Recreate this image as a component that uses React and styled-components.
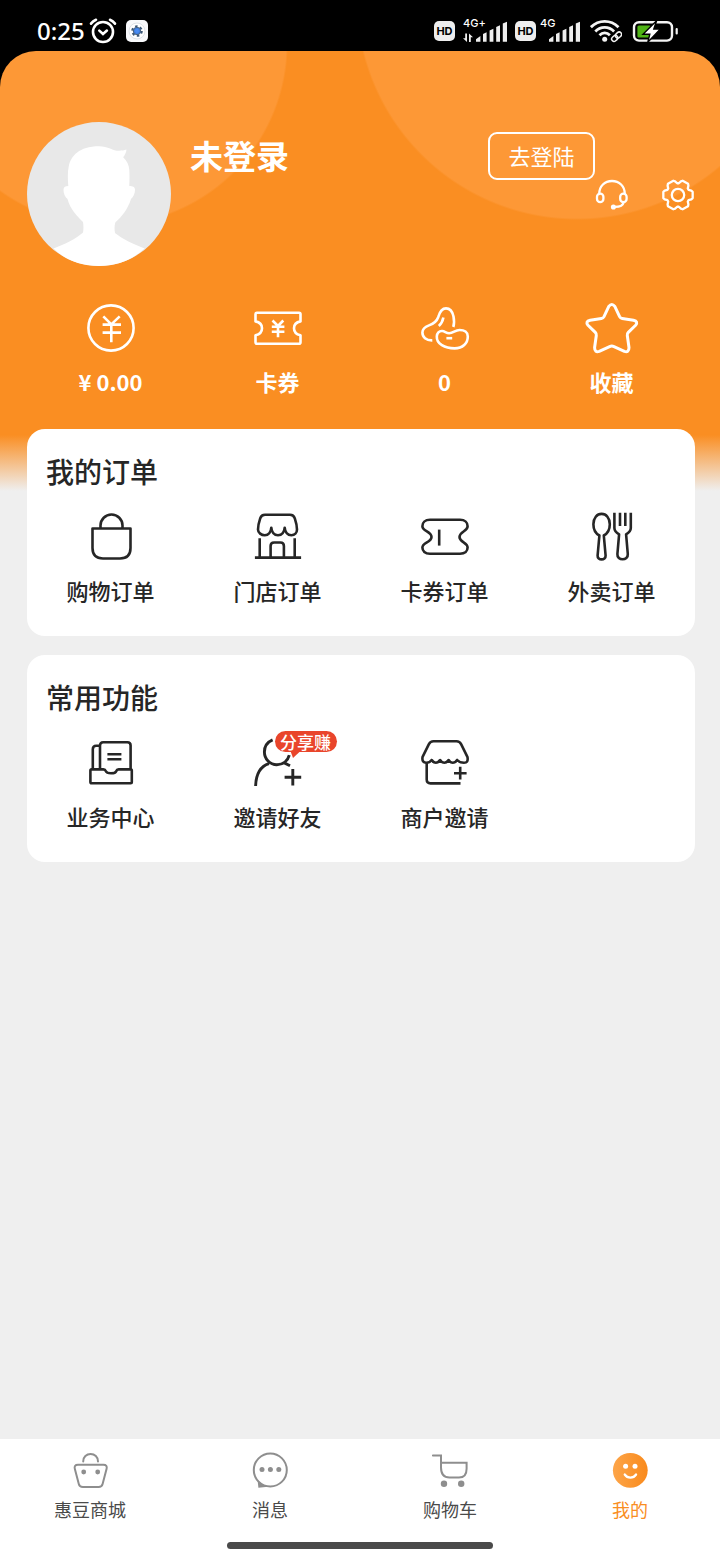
import React from "react";
import styled, { createGlobalStyle } from "styled-components";

const gearPoints = Array.from({ length: 6 }, (_, i) => {
  const point = (deg, r) => {
    const a = (deg * Math.PI) / 180;
    return `${(16 + r * Math.cos(a)).toFixed(2)},${(15 + r * Math.sin(a)).toFixed(2)}`;
  };
  return [
    point(i * 60 - 18, 14),
    point(i * 60 - 12, 15),
    point(i * 60 + 12, 15),
    point(i * 60 + 18, 14),
    point(i * 60 + 26, 11.8),
    point(i * 60 + 34, 11.8),
  ].join(" ");
}).join(" ");

const icons = {
  yuan: (
    <>
      <circle cx="24" cy="24" r="22.6" />
      <path d="M16.3 12.4l8 8 8.4-8M15.6 20.6h18.4M15.6 28.6h18.4M24.3 20.6v17.6" />
    </>
  ),
  voucher: (
    <>
      <path d="M3 8.800h42q1.500 0 1.500 1.500V17.400c-4.600.8-6.500 3.600-6.500 6.900s1.900 6.100 6.500 6.900v7q0 1.500-1.500 1.500H3q-1.500 0-1.500-1.500v-7c4.600-.8 6.500-3.600 6.500-6.900s-1.900-6.100-6.500-6.900v-7.100Q1.500 8.800 3 8.800z" />
      <path d="M18.500 16.500l5.500 5.500 5.300-5.500M17.800 22.800h12.600M17.800 27.800h12.600M24 22.500v10.700" />
    </>
  ),
  beans: (
    <>
      <path d="M11.300 36.400C5 36.600 1.400 33 1.400 28.600c0-4 2.800-5.800 6.600-7.200 4.400-1.600 7.500-3.600 9.200-8.200C18.500 8.500 20.200 4.400 25 4.400c4.600 0 6.500 3.400 7.500 8.100.8 4 .9 7.200-.2 10.500" />
      <path d="M22.400 13.500c-.7 3.600-2.200 6.400-4.600 8.500" />
      <path d="M15.800 32.500c.2-3.400 2.200-5.700 5.400-5.500 2.800.2 3.800 2.200 7 2.200 4.200 0 5.800-3.200 10.400-3.200 4.800 0 8.200 2.200 8.200 6.400 0 7-5.200 12-13.200 12-9.800 0-18.200-4.600-17.800-11.900z" />
      <path d="M25.400 34.200h5.800" />
    </>
  ),
  star: (
    <path d="M20.800 2.400Q23.800-1.600 26.800 2.400L31.600 12.600Q32.400 14.200 34.200 14.500L45.500 16.200Q50.600 17.400 47.600 21.200L40.300 28.400Q39 29.700 39.300 31.500L41 43.500Q41 48.800 36.400 47.400L26 42.600Q23.800 41.600 21.600 42.600L11.200 47.400Q6.600 48.800 6.600 43.500L8.300 31.500Q8.600 29.700 7.300 28.400L0 21.200Q-3 17.400 2.100 16.200L13.400 14.500Q15.200 14.200 16 12.600z" strokeWidth="3" />
  ),
  bag: (
    <>
      <path d="M5.500 15.500h38V35q0 10.500-10.500 10.500H16Q5.500 45.500 5.500 35z" />
      <path d="M13.500 15v-2.500a11 11 0 0 1 22 0V15" />
    </>
  ),
  store: (
    <>
      <path d="M11 1.800h25q3.600 0 4.800 3.600C42 9 43 13 43 16.500c0 3.400-2.400 5.700-5.600 5.700-3.800 0-6.400-3-6.700-7.500-.3 4.500-2.900 7.500-6.700 7.500s-6.400-3-6.700-7.500c-.3 4.500-2.900 7.500-6.500 7.500-3.400 0-6.800-2.300-6.800-5.700C4 13 5 9 6.200 5.400Q7.400 1.800 11 1.800z" />
      <path d="M5.700 25.300v19M40.700 25.300v19M.9 44.600h46.200M16.600 44.500V33q0-3.500 3.500-3.500h6.300q3.500 0 3.500 3.500v11.500" />
    </>
  ),
  coupon: (
    <>
      <path d="M9 6.800h30c5 0 7.600 3 7.600 6.400 0 5.300-8.100 5.300-8.100 10.800s8.100 5.300 8.100 10.600c0 3.400-2.600 6.200-7.600 6.200H9c-5 0-7.600-2.800-7.600-6.200 0-5.300 9.100-5.100 9.100-10.600S1.400 18.500 1.400 13.200C1.400 9.800 4 6.800 9 6.800z" />
      <path d="M18.200 16.600v16" />
    </>
  ),
  cutlery: (
    <>
      <path d="M11.400 22.500C7.800 20.500 5.400 16.200 5.400 11.200 5.400 5 9 .9 13.600.9s8.200 4.100 8.200 10.300c0 5-2.400 9.300-6 11.300l1.800 20c.4 5.200-8.400 5.200-8 0z" />
      <path d="M26.400-.2V15q0 3.600 4.700 6.300L29.400 41c-.6 7 11 7 10.400 0l-1.700-19.700q4.700-2.700 4.700-6.300V-.2M32-.2v13.200M37.300-.2v13.200" />
    </>
  ),
  business: (
    <>
      <path d="M4.600 30.400h11.800c1 0 2 .6 2.400 1.800 1 2.800 9.400 2.800 10.400 0 .4-1.200 1.400-1.800 2.400-1.800h12q1.200 0 1.200 1.200v11.500q0 1.200-1.200 1.200H4.600q-1.200 0-1.200-1.200V31.600q0-1.200 1.200-1.200z" />
      <path d="M13 30V6.500q0-3.200 3.200-3.200h24.200q3.200 0 3.200 3.200V30M5.800 30V10.200q0-3.400 3.400-3.400H13" />
      <path d="M20.400 15.300h14M20.400 20.200h14" />
    </>
  ),
  invite: (
    <path d="M18.600.8C13.500 3 10.400 7.600 10.400 12.900c0 7.100 5.600 12.800 12.400 12.800 6.200 0 11-3.800 12.500-9.500M1.600 47C2 35 6.500 27.200 15 24.600M29.300 23.400l6.700 3.400M30.600 38.200h16.600M38.800 30v16.400" strokeWidth="2.900" />
  ),
  merchant: (
    <>
      <path d="M12.500 2.200h23q3.200 0 4.600 3l6.300 12.600q1.300 6-3.500 6-4.300 0-6.800-2.800-1.800 2.800-4.300 2.800t-4.200-2.800q-1.600 2.800-4.200 2.800t-4.300-2.800q-1.600 2.800-4.200 2.800t-4.200-2.800q-2.200 2.800-5.200 2.800-5 0-3.900-6L7.900 5.200q1.400-3 4.600-3z" />
      <path d="M5.700 24v16.600q0 3.800 3.800 3.800h30M33 34.200h12.600M39.200 27.800v12.600" />
    </>
  ),
};

const menuOrders = [
  { icon: "bag", label: "购物订单" },
  { icon: "store", label: "门店订单" },
  { icon: "coupon", label: "卡券订单" },
  { icon: "cutlery", label: "外卖订单" },
];

const menuTools = [
  { icon: "business", label: "业务中心" },
  { icon: "invite", label: "邀请好友", badge: "分享赚" },
  { icon: "merchant", label: "商户邀请" },
];

const stats = [
  { icon: "yuan", label: "¥ 0.00" },
  { icon: "voucher", label: "卡券" },
  { icon: "beans", label: "0" },
  { icon: "star", label: "收藏" },
];

function Signal({ label, data }) {
  return (
    <SignalBox $wide={data}>
      <span>{label}</span>
      <svg width="44" height="22" viewBox="0 0 44 22" fill="#eee">
        {data && (
          <path d="M2.200 13.500h1.800v8.500L0 18.200h2.200zM6 22v-8.500l4 3.800H7.800V22z" />
        )}
        <path d="M13 21.800v-2.500l4.400-3.300v5.800zM20 21.800v-7.800l3.600-1.800v9.600zM26.600 21.800V10.600l3.800-1.800v13zM33.200 21.800V7l3.800-1.800v16.600zM39.800 21.800V3.600L44 1.800v20z" />
      </svg>
    </SignalBox>
  );
}

function Menu({ title, items }) {
  return (
    <Card>
      <h2>{title}</h2>
      <Grid>
        {items.map((item) => (
          <Item key={item.label} href="#">
            <IconBox>
              <LineIcon viewBox="0 0 48 48">{icons[item.icon]}</LineIcon>
              {item.badge && <Badge>{item.badge}</Badge>}
            </IconBox>
            <span>{item.label}</span>
          </Item>
        ))}
      </Grid>
    </Card>
  );
}

export default function App() {
  return (
    <Page>
      <GlobalStyle />
      <StatusBar>
        <div className="left">
          <time>0:25</time>
          <svg width="28" height="26" viewBox="0 0 28 26" fill="none" stroke="#fff" strokeWidth="2.600" strokeLinecap="round">
            <circle cx="14" cy="14" r="10" />
            <path d="M10.300 12.600l3.700 3.400 3.900-3.400M2 5.600Q4 3 7 1.800M26 5.600Q24 3 21 1.800" />
          </svg>
          <svg className="app" width="22" height="22" viewBox="0 0 22 22">
            <rect width="22" height="22" rx="5" fill="#f8f9fb" />
            <circle cx="11" cy="11" r="8" fill="#fff" stroke="#dfe3e8" />
            <circle cx="11" cy="11" r="4.600" fill="none" stroke="#3d5876" strokeWidth="2.400" strokeDasharray="2.400 2.416" />
            <circle cx="11" cy="11" r="3.700" fill="#3f7fe0" stroke="#4a6380" strokeWidth="1" />
            <circle cx="11" cy="11" r="2" fill="#4b8df2" />
          </svg>
        </div>
        <div className="right">
          <Hd>HD</Hd>
          <Signal label="4G+" data />
          <Hd>HD</Hd>
          <Signal label="4G" />
          <svg className="wifi" width="32" height="24" viewBox="0 0 32 24" fill="none" stroke="#f4f4f4" strokeWidth="2.800">
            <path d="M.9 8.200C8.800.4 20.600.4 28.500 8.200M5.300 12.400c5.500-5.400 13.300-5.400 18.800 0M9.500 16.200c3-3 7.400-3 10.400 0" />
            <circle cx="14.700" cy="20.200" r="2.500" fill="#f4f4f4" stroke="none" />
            <g strokeWidth="1.500" transform="rotate(-42 26.500 17.800)">
              <rect x="20.800" y="15.400" width="6.600" height="4.800" rx="2.400" />
              <rect x="25.800" y="15.400" width="6.600" height="4.800" rx="2.400" />
            </g>
          </svg>
          <svg className="battery" width="46" height="23" viewBox="0 0 46 23">
            <rect x="2" y="2.200" width="38" height="18.400" rx="5" fill="none" stroke="#f4f4f4" strokeWidth="2.400" />
            <rect x="5.400" y="5.400" width="13.500" height="12" rx="1.500" fill="#4fb315" />
            <rect x="43.600" y="8" width="2.200" height="6.600" rx="1" fill="#f4f4f4" />
            <path d="M24.600.8L11 14.200h6.800l-2 8L28.400 9h-6.600z" fill="#fff" stroke="#000" strokeWidth="1.400" />
          </svg>
        </div>
      </StatusBar>

      <Screen>
        <Profile>
          <Avatar viewBox="0 0 144 144">
            <circle cx="72" cy="72" r="72" fill="#e8e8e8" />
            <path
              fill="#fff"
              d="M41.300 64c-.6-7-.8-14 .5-20C44 34 52 24.200 72 24.200c9 0 14 4.600 20 4.600 3 0 5-.4 7.500-1.200-.3 3-1.500 5.400-3.300 7.600 4 4 5.800 8 6.100 12.800.3 5 .2 11 0 16 3.400 0 5.700 1 5.700 3.800 0 4-1.600 7.200-4 9.200C101 87 94.500 95 88.300 100.500c-1 3.500-.9 7-.3 10.500 8 6.500 18 11 29.600 15.500C105 138 90 144 72 144s-34-6-45.500-17.500C38 122 49 117 56 110.500c.6-3.500.6-7 0-10.500C50 94 43 87 40.500 77c-2.600-2-4-5.200-4-9.200 0-2.800 2-3.800 4.800-3.800z"
            />
          </Avatar>
          <h1>未登录</h1>
          <LoginButton type="button">去登陆</LoginButton>
          <Actions>
            <button type="button" aria-label="客服">
              <svg width="32" height="32" viewBox="0 0 32 32">
                <path d="M3.200 14C3.200 6 8.800 1 16 1s12.800 5 12.800 13" />
                <rect x="1" y="13.600" width="6.400" height="8.600" rx="3.200" />
                <rect x="24.200" y="13.600" width="6.400" height="8.600" rx="3.200" />
                <path d="M27.600 22.400c-.6 2.600-3.400 4.400-8.600 4.500" />
                <circle cx="17.400" cy="27" r="1.400" fill="#fff" />
              </svg>
            </button>
            <button type="button" aria-label="设置">
              <svg width="32" height="32" viewBox="0 0 32 32">
                <polygon points={gearPoints} />
                <circle cx="16" cy="15" r="6.200" />
              </svg>
            </button>
          </Actions>
        </Profile>

        <Stats>
          {stats.map((item) => (
            <Item key={item.icon} href="#" $bold>
              <LineIcon viewBox="0 0 48 48">{icons[item.icon]}</LineIcon>
              <span>{item.label}</span>
            </Item>
          ))}
        </Stats>

        <Menu title="我的订单" items={menuOrders} />
        <Menu title="常用功能" items={menuTools} />
      </Screen>

      <TabBar>
        <div className="tabs">
          <Tab href="#">
            <svg viewBox="0 0 36 36">
              <path d="M11.200 8.400C11.200 4 14.500 1 18.600 1S26 4 26 8.400" />
              <path d="M6 11.800h25.400q4.200 0 3.200 4l-4 15.200q-.8 3-4 3H10.800q-3.200 0-4-3l-4-15.200q-1-4 3.200-4z" />
              <circle className="dot" cx="11.700" cy="19" r="2.400" />
              <circle className="dot" cx="25.700" cy="19" r="2.400" />
            </svg>
            惠豆商城
          </Tab>
          <Tab href="#">
            <svg viewBox="0 0 36 36">
              <circle cx="18.300" cy="17" r="16.500" />
              <path className="dot" d="M5.600 27.200l.8 7.600 12-1.400C13 33 9 31 5.600 27.200z" />
              <circle className="dot" cx="10" cy="16.500" r="2.500" />
              <circle className="dot" cx="18.400" cy="16.500" r="2.500" />
              <circle className="dot" cx="26.800" cy="16.500" r="2.500" />
            </svg>
            消息
          </Tab>
          <Tab href="#">
            <svg viewBox="0 0 36 36">
              <path d="M.9 2.600H9v12c0 7 2.500 10 8.500 10H27c5 0 7.600-3.600 7.600-8.800V9.800H9" />
              <circle className="dot" cx="12" cy="30.800" r="3.200" />
              <circle className="dot" cx="29.200" cy="30.800" r="3.200" />
            </svg>
            购物车
          </Tab>
          <Tab href="#" $active>
            <svg viewBox="0 0 36 36">
              <defs>
                <linearGradient id="smile" x1="0" x2="1">
                  <stop offset="0" stopColor="#fda549" />
                  <stop offset="1" stopColor="#f98a1c" />
                </linearGradient>
              </defs>
              <circle cx="18.300" cy="17.300" r="17.400" fill="url(#smile)" stroke="none" />
              <circle cx="13.600" cy="13.200" r="2.500" fill="#fff" stroke="none" />
              <circle cx="23" cy="13.200" r="2.500" fill="#fff" stroke="none" />
              <path d="M12.800 21.600c2.600 4 8.600 4 11.200 0" stroke="#fff" strokeWidth="2.400" />
            </svg>
            我的
          </Tab>
        </div>
        <div className="indicator" />
      </TabBar>
    </Page>
  );
}

const GlobalStyle = createGlobalStyle`
  * {
    box-sizing: border-box;
  }
  body {
    margin: 0;
    background: #000;
    color: #262626;
    font-family: "Noto Sans CJK SC", "Noto Sans", sans-serif;
  }
  h1, h2 {
    margin: 0;
  }
  a {
    color: inherit;
    text-decoration: none;
  }
  button {
    padding: 0;
    border: none;
    background: none;
    color: inherit;
    font-family: inherit;
  }
  svg {
    display: block;
  }
`;

const Page = styled.div`
  min-height: 100vh;
  display: flex;
  flex-direction: column;
`;

const StatusBar = styled.header`
  display: flex;
  justify-content: space-between;
  align-items: center;
  height: 51px;
  padding: 11px 42px 0 37px;
  color: #fff;
  .left,
  .right {
    display: flex;
    align-items: center;
  }
  time {
    margin-right: 4px;
    font: 500 24px/24px "Noto Sans", sans-serif;
  }
  .app {
    margin-left: 9px;
  }
  .wifi {
    margin: 0 10px;
  }
`;

const Hd = styled.span`
  width: 21px;
  height: 20px;
  border-radius: 5px;
  background: #eee;
  color: #000;
  font: bold 11px/20px Inter, sans-serif;
  text-align: center;
`;

const SignalBox = styled.div`
  position: relative;
  display: flex;
  justify-content: flex-end;
  width: ${(props) => (props.$wide ? "44px" : "40px")};
  margin: ${(props) => (props.$wide ? "0 8px" : "0 0 0 4px")};
  span {
    position: absolute;
    top: -2px;
    left: 0;
    font: 500 11px/11px Inter, sans-serif;
  }
  svg {
    flex: none;
  }
`;

const Screen = styled.main`
  flex: 1;
  display: flex;
  flex-direction: column;
  padding: 71px 25px 24px 27px;
  border-radius: 36px 36px 0 0;
  background:
    radial-gradient(circle at 106px -7px, #fd9836 180px, transparent 182px),
    radial-gradient(circle at 577px -52px, #fd9836 219px, transparent 221px),
    linear-gradient(#fa8e22 384px, #efefef 440px);
`;

const Profile = styled.section`
  display: flex;
  align-items: flex-start;
  color: #fff;
  h1 {
    flex: 1;
    margin: 10px 0 0 19px;
    font-size: 33px;
    line-height: 46px;
  }
`;

const Avatar = styled.svg`
  width: 144px;
  height: 144px;
`;

const LoginButton = styled.button`
  width: 107px;
  height: 48px;
  margin-top: 10px;
  padding-bottom: 2px;
  border: 2px solid #fff;
  border-radius: 9px;
  font-size: 22px;
  line-height: 42px;
`;

const Actions = styled.div`
  display: flex;
  gap: 34px;
  margin: 58px 1px 0;
  svg {
    fill: none;
    stroke: #fff;
    stroke-width: 2.3;
    stroke-linejoin: round;
    stroke-linecap: round;
    overflow: visible;
  }
`;

const Grid = styled.div`
  display: grid;
  grid-template-columns: repeat(4, 1fr);
`;

const Stats = styled(Grid)`
  margin: 38px 0 34px;
  color: #fff;
`;

const Item = styled.a`
  display: flex;
  flex-direction: column;
  align-items: center;
  gap: 15px;
  font-size: 22px;
  font-weight: ${(props) => (props.$bold ? 700 : 500)};
  line-height: 28px;
`;

const IconBox = styled.div`
  position: relative;
`;

const LineIcon = styled.svg`
  width: 48px;
  height: 48px;
  overflow: visible;
  fill: none;
  stroke: currentColor;
  stroke-width: 2.6;
  stroke-linejoin: round;
`;

const Badge = styled.span`
  position: absolute;
  top: -8px;
  left: 21px;
  width: 62px;
  border-radius: 11px;
  background: #e9452b;
  color: #fff;
  font-size: 17px;
  line-height: 21px;
  text-align: center;
  &::after {
    content: "";
    position: absolute;
    top: 20px;
    left: 16px;
    width: 10px;
    height: 7px;
    background: #e9452b;
    clip-path: polygon(0 0, 100% 0, 25% 100%);
  }
`;

const Card = styled.section`
  padding: 22px 0 32px;
  border-radius: 18px;
  background: #fff;
  & + & {
    margin-top: 19px;
  }
  h2 {
    margin: 0 19px 22px;
    font-size: 28px;
    font-weight: 500;
    line-height: 40px;
  }
`;

const TabBar = styled.nav`
  padding: 14px 0 11px;
  background: #fff;
  .tabs {
    display: grid;
    grid-template-columns: repeat(4, 1fr);
  }
  .indicator {
    width: 37%;
    height: 7px;
    margin: 19px auto 0;
    border-radius: 4px;
    background: #4a4a4a;
  }
`;

const Tab = styled.a`
  display: flex;
  flex-direction: column;
  align-items: center;
  gap: 7px;
  color: ${(props) => (props.$active ? "#f98d22" : "#4a4a4a")};
  font-size: 18px;
  line-height: 27px;
  svg {
    width: 36px;
    height: 36px;
    overflow: visible;
    fill: none;
    stroke: #8e8e8e;
    stroke-width: 2;
    stroke-linecap: round;
  }
  .dot {
    fill: #8e8e8e;
    stroke: none;
  }
`;
